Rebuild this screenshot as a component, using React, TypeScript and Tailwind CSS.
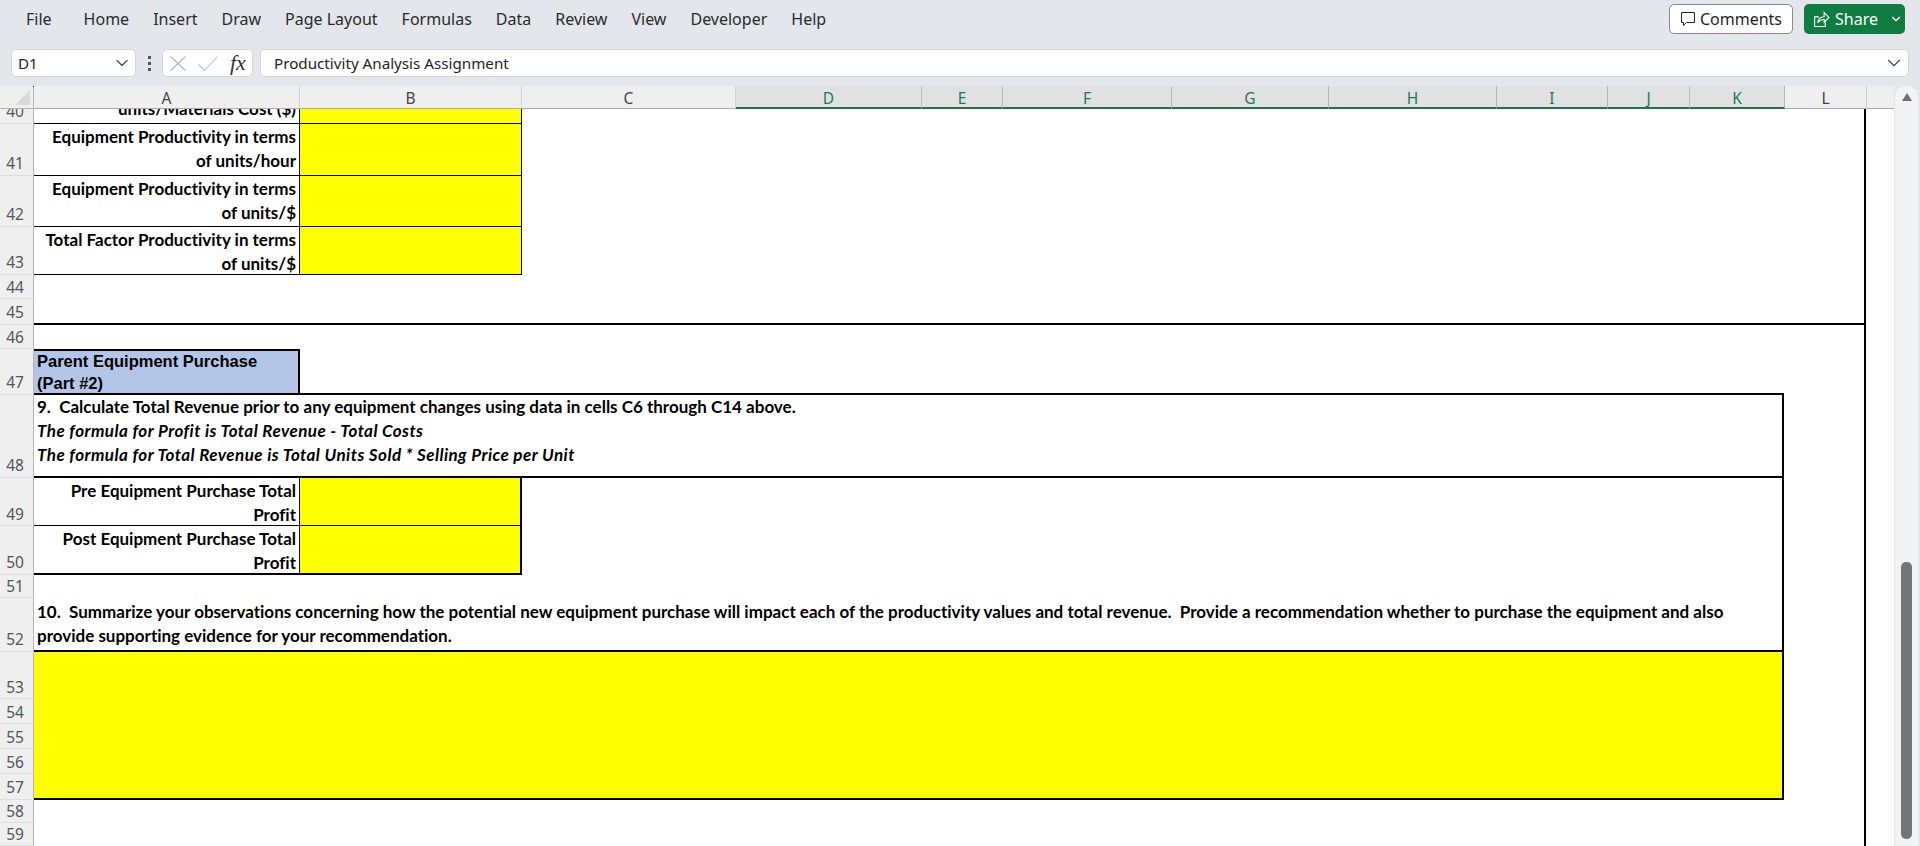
import type { ReactNode } from "react";
import { ChevronDown } from "lucide-react";

const MENU = ["Home", "Insert", "Draw", "Page Layout", "Formulas", "Data", "Review", "View", "Developer", "Help"];

const COLUMNS = [
  { label: "A", width: "w-[266px]", active: false },
  { label: "B", width: "w-[222px]", active: false },
  { label: "C", width: "w-[214px]", active: false },
  { label: "D", width: "w-[186px]", active: true },
  { label: "E", width: "w-[81px]", active: true },
  { label: "F", width: "w-[169px]", active: true },
  { label: "G", width: "w-[157px]", active: true },
  { label: "H", width: "w-[168px]", active: true },
  { label: "I", width: "w-[111px]", active: true },
  { label: "J", width: "w-[82px]", active: true },
  { label: "K", width: "w-[95px]", active: true },
  { label: "L", width: "w-[82px]", active: false },
];

// rows whose bottom rule sits one pixel past the gutter label
const LOW_RULE = [40, 41, 42, 43, 45, 47, 48, 50, 52, 57];

const CELL_FONT = "font-['Lato',sans-serif] text-[17px] font-bold leading-[24px] text-black [font-variant-ligatures:none]";

function CommentIcon() {
  return (
    <svg viewBox="0 0 16 16" className="h-[16px] w-[16px]" fill="none" stroke="currentColor" strokeWidth="1">
      <path d="M1.5 1.5h13v10H6.5l-3 3v-3h-2z" />
    </svg>
  );
}

function ShareIcon() {
  return (
    <svg viewBox="0 0 16 16" className="h-[17px] w-[17px]" fill="none" stroke="currentColor" strokeWidth="1">
      <path d="M5.5 5.5H1.5v9h10v-5" />
      <path d="M4.5 11c.3-3.4 2.4-5.4 6-5.5V1.5l4.5 4.500-4.500 4.500V8c-2.600 0-4.600.9-6 3z" />
    </svg>
  );
}

function TopBar() {
  return (
    <div className="flex h-[49px] shrink-0 items-start justify-between pl-[26px] pr-[15px] pt-[4px]">
      <nav className="flex h-[30px] items-center gap-[24px] font-['Noto_Sans',sans-serif] text-[16px] text-[#2b2b2b]">
        <span className="mr-[8px]">File</span>
        {MENU.map((item) => (
          <span key={item}>{item}</span>
        ))}
      </nav>
      <div className="flex gap-[11px] font-['Noto_Sans',sans-serif] text-[16px]">
        <button type="button" className="flex h-[30px] w-[124px] items-center justify-center gap-[4px] rounded-[5px] border border-[#8a8a8a] bg-white text-[#242424]">
          <CommentIcon />
          Comments
        </button>
        <button type="button" className="flex h-[30px] w-[101px] items-center rounded-[5px] bg-[#107c41] pl-[9px] text-white">
          <ShareIcon />
          <span className="ml-[5px]">Share</span>
          <ChevronDown className="ml-[11px] h-[14px] w-[14px]" strokeWidth={2} />
        </button>
      </div>
    </div>
  );
}

function FormulaBar() {
  return (
    <div className="flex h-[28px] shrink-0 pl-[11px] pr-[11px] font-['Noto_Sans',sans-serif] text-[15.2px] text-[#242424]">
      <div className="flex w-[125px] items-center justify-between rounded-[5px] border border-[#d6d6d6] bg-white pl-[6px] pr-[3px]">
        D1
        <ChevronDown className="h-[20px] w-[20px] text-[#444]" strokeWidth={1.3} />
      </div>
      <div className="flex w-[26px] flex-col items-center justify-center gap-[3px]">
        <span className="h-[3px] w-[3px] bg-[#555]" />
        <span className="h-[3px] w-[3px] bg-[#555]" />
        <span className="h-[3px] w-[3px] bg-[#555]" />
      </div>
      <div className="flex w-[91px] items-center rounded-[5px] border border-[#d6d6d6] bg-white pl-[7px]">
        <svg viewBox="0 0 16 15" className="h-[15px] w-[16px]" fill="none" stroke="#b5b5b5" strokeWidth="1.1">
          <path d="M.5.5l15 14M15.5.5l-15 14" />
        </svg>
        <svg viewBox="0 0 20 15" className="ml-[12px] h-[15px] w-[20px]" fill="none" stroke="#bdbdbd" strokeWidth="1.1">
          <path d="M.5 8.5l6 6L19.5.5" />
        </svg>
        <span className="ml-[12px] font-['Liberation_Serif',serif] text-[22px] italic leading-none text-[#333]">fx</span>
      </div>
      <div className="ml-[7px] flex flex-1 items-center justify-between rounded-[5px] border border-[#d6d6d6] bg-white pl-[13px] pr-[3px]">
        Productivity Analysis Assignment
        <ChevronDown className="h-[22px] w-[22px] text-[#444]" strokeWidth={1.2} />
      </div>
    </div>
  );
}

function ColumnHeaders() {
  return (
    <div className="flex h-[23px] shrink-0 bg-[#efefef] font-['Noto_Sans',sans-serif] text-[15.5px] leading-[24px]">
      <div className="relative w-[34px] shrink-0 border-b border-r border-[#b5b5b5]">
        <svg viewBox="0 0 15 15" className="absolute bottom-[3px] right-[3px] h-[15px] w-[15px]">
          <path d="M15 0v15H0z" fill="#d9d9d9" />
        </svg>
        <span className="absolute right-[-1px] top-0 h-[1px] w-[1px] bg-black" />
      </div>
      {COLUMNS.map((col) =>
        col.active ? (
          <div
            key={col.label}
            className={`${col.width} shrink-0 border-b-2 border-r border-b-[#217346] border-r-[#b8b8b8] bg-[#e1e1e1] text-center text-[#1c7a5c]`}
          >
            {col.label}
          </div>
        ) : (
          <div key={col.label} className={`${col.width} shrink-0 border-b border-r border-b-[#ababab] border-r-[#cfcfcf] text-center text-[#444]`}>
            {col.label}
          </div>
        ),
      )}
      <div className="flex-1 border-b border-[#ababab]" />
    </div>
  );
}

function Row({ n, height, rule, children }: { n: number; height: string; rule?: boolean; children?: ReactNode }) {
  return (
    <div className={`flex shrink-0 ${height}`}>
      <div
        className={`flex w-[34px] shrink-0 items-end justify-center overflow-hidden border-b border-r border-b-[#dcdcdc] border-r-[#b5b5b5] bg-[#efefef] pr-[3px] font-['Noto_Sans',sans-serif] text-[15.5px] leading-[22px] text-[#555] ${
          LOW_RULE.includes(n) ? "pb-[1px]" : ""
        }`}
      >
        {n}
      </div>
      <div className="flex w-[1750px] shrink-0">{children}</div>
      <div className={`w-[82px] shrink-0 border-r-2 border-black ${rule ? "border-b-2" : ""}`} />
    </div>
  );
}

function Label({ children, border = "border-b" }: { children: ReactNode; border?: string }) {
  return (
    <div className={`w-[266px] shrink-0 border-r border-black pr-[3px] pt-[1px] text-right ${border} border-b-black ${CELL_FONT}`}>{children}</div>
  );
}

function YellowCell({ border }: { border: string }) {
  return <div className={`w-[222px] shrink-0 bg-[#ffff00] ${border} border-black`} />;
}

function Sheet() {
  return (
    <div className="flex min-w-0 flex-1 flex-col overflow-hidden bg-white">
      <ColumnHeaders />
      <Row n={40} height="h-[15px]">
        <div className={`h-[15px] w-[266px] shrink-0 overflow-hidden border-b border-r border-black pr-[3px] text-right ${CELL_FONT}`}>
          <div className="-mt-[12px]">units/Materials Cost ($)</div>
        </div>
        <YellowCell border="border-b border-r" />
      </Row>
      <Row n={41} height="h-[52px]">
        <Label>
          Equipment Productivity in terms
          <br />
          of units/hour
        </Label>
        <YellowCell border="border-b border-r" />
      </Row>
      <Row n={42} height="h-[51px]">
        <Label>
          Equipment Productivity in terms
          <br />
          of units/$
        </Label>
        <YellowCell border="border-b border-r" />
      </Row>
      <Row n={43} height="h-[48px]">
        <Label>
          Total Factor Productivity in terms
          <br />
          of units/$
        </Label>
        <YellowCell border="border-b border-r" />
      </Row>
      <Row n={44} height="h-[24px]" />
      <Row n={45} height="h-[26px]" rule>
        <div className="flex-1 border-b-2 border-black" />
      </Row>
      <Row n={46} height="h-[24px]" />
      <Row n={47} height="h-[46px]">
        <div className="flex w-[266px] shrink-0 flex-col justify-end border-b-2 border-r-2 border-t-2 border-black bg-[#b4c6e7] pl-[3px] font-['Liberation_Sans',sans-serif] text-[16.5px] font-bold leading-[22px] text-black">
          <div className="-mb-[1px]">
            Parent Equipment Purchase
            <br />
            (Part #2)
          </div>
        </div>
        <div className="flex-1 border-b-2 border-black" />
      </Row>
      <Row n={48} height="h-[83px]">
        <div className={`flex-1 whitespace-pre border-b-2 border-r-2 border-black pl-[3px] ${CELL_FONT}`}>
          9.  Calculate Total Revenue prior to any equipment changes using data in cells C6 through C14 above.
          <br />
          <i className="tracking-[0.44px]">The formula for Profit is Total Revenue - Total Costs</i>
          <br />
          <i className="tracking-[0.44px]">The formula for Total Revenue is Total Units Sold * Selling Price per Unit</i>
        </div>
      </Row>
      <Row n={49} height="h-[48px]">
        <Label>
          Pre Equipment Purchase Total
          <br />
          Profit
        </Label>
        <YellowCell border="border-b border-r-2" />
        <div className="flex-1 border-r-2 border-black" />
      </Row>
      <Row n={50} height="h-[49px]">
        <Label border="border-b-2">
          Post Equipment Purchase Total
          <br />
          Profit
        </Label>
        <YellowCell border="border-b-2 border-r-2" />
        <div className="flex-1 border-r-2 border-black" />
      </Row>
      <Row n={51} height="h-[23px]">
        <div className="flex-1 border-r-2 border-black" />
      </Row>
      <Row n={52} height="h-[54px]">
        <div className={`flex-1 whitespace-pre border-b-2 border-r-2 border-black pl-[3px] pt-[2px] ${CELL_FONT}`}>
          10.  Summarize your observations concerning how the potential new equipment purchase will impact each of the productivity values and total revenue.  Provide a recommendation whether to purchase the equipment and also
          <br />
          provide supporting evidence for your recommendation.
        </div>
      </Row>
      <Row n={53} height="h-[47px]">
        <div className="flex-1 border-r-2 border-black bg-[#ffff00]" />
      </Row>
      <Row n={54} height="h-[25px]">
        <div className="flex-1 border-r-2 border-black bg-[#ffff00]" />
      </Row>
      <Row n={55} height="h-[25px]">
        <div className="flex-1 border-r-2 border-black bg-[#ffff00]" />
      </Row>
      <Row n={56} height="h-[25px]">
        <div className="flex-1 border-r-2 border-black bg-[#ffff00]" />
      </Row>
      <Row n={57} height="h-[26px]">
        <div className="flex-1 border-b-2 border-r-2 border-black bg-[#ffff00]" />
      </Row>
      <Row n={58} height="h-[23px]" />
      <Row n={59} height="h-[23px]" />
    </div>
  );
}

function Scrollbar() {
  return (
    <div className="ml-[1px] mr-[2px] flex w-[23px] shrink-0 flex-col items-center rounded-t-[10px] bg-[#f3f3f3]">
      <svg viewBox="0 0 10 8" className="mt-[7px] h-[8px] w-[10px]">
        <path d="M5 0l5 8H0z" fill="#6e6e6e" />
      </svg>
      <div className="mt-[461px] h-[277px] w-[11px] rounded-[5px] bg-[#757575]" />
    </div>
  );
}

export default function App() {
  return (
    <div className="flex h-[846px] w-full flex-col overflow-hidden bg-[#e3e6eb]">
      <TopBar />
      <FormulaBar />
      <div className="h-[9px] shrink-0" />
      <div className="flex min-h-0 flex-1">
        <Sheet />
        <Scrollbar />
      </div>
    </div>
  );
}
